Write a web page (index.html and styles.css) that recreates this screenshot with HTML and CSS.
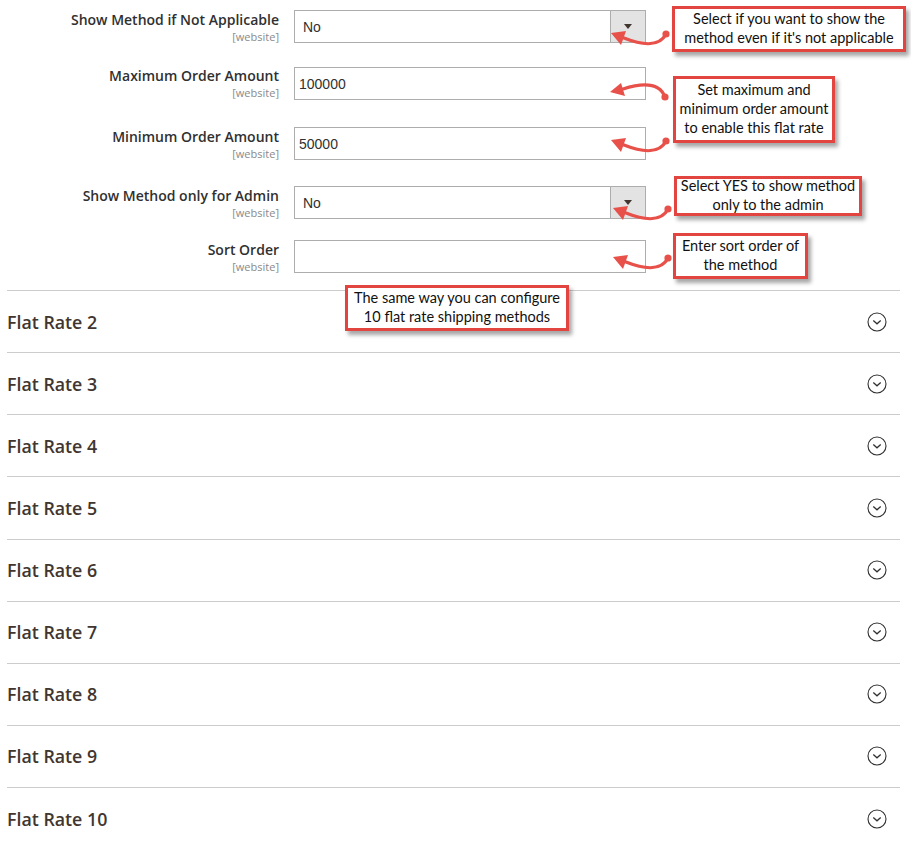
FILE: index.html
```html
<!DOCTYPE html>
<html>
<head>
<meta charset="utf-8">
<link rel="stylesheet" href="styles.css">
</head>
<body>
<div class="page">
  <div class="form">
    <div class="row row-1">
      <div class="label"><span class="label-text">Show Method if Not Applicable</span><span class="scope">[website]</span></div>
      <div class="control select"><span class="value value-select">No</span><span class="select-btn"><span class="tri"></span></span></div>
    </div>
    <div class="row row-2">
      <div class="label"><span class="label-text">Maximum Order Amount</span><span class="scope">[website]</span></div>
      <div class="control"><span class="value">100000</span></div>
    </div>
    <div class="row row-3">
      <div class="label"><span class="label-text">Minimum Order Amount</span><span class="scope">[website]</span></div>
      <div class="control"><span class="value">50000</span></div>
    </div>
    <div class="row row-4">
      <div class="label"><span class="label-text">Show Method only for Admin</span><span class="scope">[website]</span></div>
      <div class="control select"><span class="value value-select">No</span><span class="select-btn"><span class="tri"></span></span></div>
    </div>
    <div class="row row-5">
      <div class="label"><span class="label-text">Sort Order</span><span class="scope">[website]</span></div>
      <div class="control"><span class="value"></span></div>
    </div>
  </div>

  <div class="sections">
    <div class="section"><span class="section-title">Flat Rate 2</span><svg class="chev" viewBox="0 0 20 20"><circle cx="10" cy="10" r="9" /><path d="M6.3 8.6 L10 11.8 L13.7 8.6" /></svg></div>
    <div class="section"><span class="section-title">Flat Rate 3</span><svg class="chev" viewBox="0 0 20 20"><circle cx="10" cy="10" r="9" /><path d="M6.3 8.6 L10 11.8 L13.7 8.6" /></svg></div>
    <div class="section"><span class="section-title">Flat Rate 4</span><svg class="chev" viewBox="0 0 20 20"><circle cx="10" cy="10" r="9" /><path d="M6.3 8.6 L10 11.8 L13.7 8.6" /></svg></div>
    <div class="section"><span class="section-title">Flat Rate 5</span><svg class="chev" viewBox="0 0 20 20"><circle cx="10" cy="10" r="9" /><path d="M6.3 8.6 L10 11.8 L13.7 8.6" /></svg></div>
    <div class="section"><span class="section-title">Flat Rate 6</span><svg class="chev" viewBox="0 0 20 20"><circle cx="10" cy="10" r="9" /><path d="M6.3 8.6 L10 11.8 L13.7 8.6" /></svg></div>
    <div class="section"><span class="section-title">Flat Rate 7</span><svg class="chev" viewBox="0 0 20 20"><circle cx="10" cy="10" r="9" /><path d="M6.3 8.6 L10 11.8 L13.7 8.6" /></svg></div>
    <div class="section"><span class="section-title">Flat Rate 8</span><svg class="chev" viewBox="0 0 20 20"><circle cx="10" cy="10" r="9" /><path d="M6.3 8.6 L10 11.8 L13.7 8.6" /></svg></div>
    <div class="section"><span class="section-title">Flat Rate 9</span><svg class="chev" viewBox="0 0 20 20"><circle cx="10" cy="10" r="9" /><path d="M6.3 8.6 L10 11.8 L13.7 8.6" /></svg></div>
    <div class="section"><span class="section-title">Flat Rate 10</span><svg class="chev" viewBox="0 0 20 20"><circle cx="10" cy="10" r="9" /><path d="M6.3 8.6 L10 11.8 L13.7 8.6" /></svg></div>
  </div>

  <!-- annotation overlays -->
  <div class="callout callout-1">Select if you want to show the<br>method even if it's not applicable</div>
  <div class="callout callout-2">Set maximum and<br>minimum order amount<br>to enable this flat rate</div>
  <div class="callout callout-3">Select YES to show method<br>only to the admin</div>
  <div class="callout callout-4">Enter sort order of<br>the method</div>
  <div class="callout callout-5">The same way you can configure<br>10 flat rate shipping methods</div>

  <svg class="arrow arrow-1" viewBox="0 0 64 30"><path class="arrow-line" d="M60 13 C 54 25, 38 25, 18 17" /><polygon class="arrow-head" points="5,12 20,10 15,24" /><circle class="arrow-dot" cx="60" cy="13" r="3.6" /></svg>
  <svg class="arrow arrow-2" viewBox="0 0 64 30"><path class="arrow-line" d="M60 22 C 55 9, 40 7, 18 14" /><polygon class="arrow-head" points="5,17 16,8 20,21" /><circle class="arrow-dot" cx="60" cy="22" r="3.6" /></svg>
  <svg class="arrow arrow-3" viewBox="0 0 64 30"><path class="arrow-line" d="M60 13 C 54 25, 38 25, 18 17" /><polygon class="arrow-head" points="5,12 20,10 15,24" /><circle class="arrow-dot" cx="60" cy="13" r="3.6" /></svg>
  <svg class="arrow arrow-4" viewBox="0 0 64 30"><path class="arrow-line" d="M60 13 C 54 25, 38 25, 18 17" /><polygon class="arrow-head" points="5,12 20,10 15,24" /><circle class="arrow-dot" cx="60" cy="13" r="3.6" /></svg>
  <svg class="arrow arrow-5" viewBox="0 0 64 30"><path class="arrow-line" d="M60 13 C 54 25, 38 25, 18 17" /><polygon class="arrow-head" points="5,12 20,10 15,24" /><circle class="arrow-dot" cx="60" cy="13" r="3.6" /></svg>
</div>
</body>
</html>
```

FILE: styles.css
```css
html, body {
  margin: 0;
  padding: 0;
  background: #ffffff;
}

.page {
  position: relative;
  width: 911px;
  height: 849px;
  overflow: hidden;
  font-family: "Open Sans", "Noto Sans", sans-serif;
  color: #303030;
}

.form {
  display: flex;
  flex-direction: column;
  padding-top: 10px;
}

.row {
  display: grid;
  grid-template-columns: 279px 352px;
  column-gap: 15px;
  height: 33px;
}

.row-2 { margin-top: 24px; }
.row-3 { margin-top: 27px; }
.row-4 { margin-top: 26px; }
.row-5 { margin-top: 21px; }

.label {
  display: flex;
  flex-direction: column;
  align-items: flex-end;
  text-align: right;
  padding-top: 1px;
}

.row-2 .label { padding-top: 0; }

.label-text {
  font-size: 14px;
  font-weight: 600;
  line-height: 18px;
  color: #303030;
  white-space: nowrap;
}

.scope {
  font-size: 11px;
  line-height: 13px;
  color: #8a8a8a;
  margin-top: 0.5px;
}

.control {
  box-sizing: border-box;
  height: 33px;
  border: 1px solid #adadad;
  background: #fff;
  display: flex;
  align-items: center;
}

.value {
  flex: 1;
  font-family: "Liberation Sans", Arial, sans-serif;
  font-size: 14px;
  color: #303030;
  padding-left: 4px;
}

.value-select {
  padding-left: 8px;
}

.select-btn {
  width: 34px;
  height: 100%;
  background: #e3e3e3;
  border-left: 1px solid #adadad;
  display: flex;
  align-items: center;
  justify-content: center;
}

.tri {
  width: 0;
  height: 0;
  border-left: 4px solid transparent;
  border-right: 4px solid transparent;
  border-top: 5px solid #41362f;
}

.sections {
  margin: 17px 11px 0 7px;
}

.section {
  box-sizing: border-box;
  height: 62.125px;
  border-top: 1px solid #cccccc;
  display: flex;
  align-items: center;
  justify-content: space-between;
  padding-right: 13px;
}

.section-title {
  font-size: 17.8px;
  font-weight: 600;
  color: #41362f;
  line-height: 22px;
}

.chev {
  width: 20px;
  height: 20px;
  fill: none;
  stroke: #303030;
  stroke-width: 1.1;
}

.chev path {
  stroke-width: 1.3;
}

/* annotation callouts */
.callout {
  position: absolute;
  box-sizing: border-box;
  border: 3px solid #e2453f;
  background: #ffffff;
  box-shadow: 3px 4px 4px rgba(0, 0, 0, 0.35);
  font-family: Lato, "Liberation Sans", sans-serif;
  font-size: 14.5px;
  line-height: 19px;
  color: #111111;
  text-align: center;
  white-space: nowrap;
  display: flex;
  align-items: center;
  justify-content: center;
  padding-bottom: 2px;
}

.callout-1 { left: 672px; top: 6px; width: 234px; height: 46px; }
.callout-2 { left: 673px; top: 76px; width: 162px; height: 67px; }
.callout-3 { left: 674px; top: 176px; width: 188px; height: 40px; }
.callout-4 { left: 673px; top: 233px; width: 135px; height: 46px; }
.callout-5 { left: 345px; top: 285px; width: 224px; height: 46px; }

.arrow {
  position: absolute;
  width: 64px;
  height: 30px;
  overflow: visible;
}

.arrow-line {
  fill: none;
  stroke: #e8504a;
  stroke-width: 3.2;
  stroke-linecap: round;
}

.arrow-head,
.arrow-dot {
  fill: #e8504a;
}

.arrow-1 { left: 606px; top: 21px; }
.arrow-2 { left: 605px; top: 75px; }
.arrow-3 { left: 606px; top: 128px; }
.arrow-4 { left: 608px; top: 196px; }
.arrow-5 { left: 608px; top: 245px; }
```
